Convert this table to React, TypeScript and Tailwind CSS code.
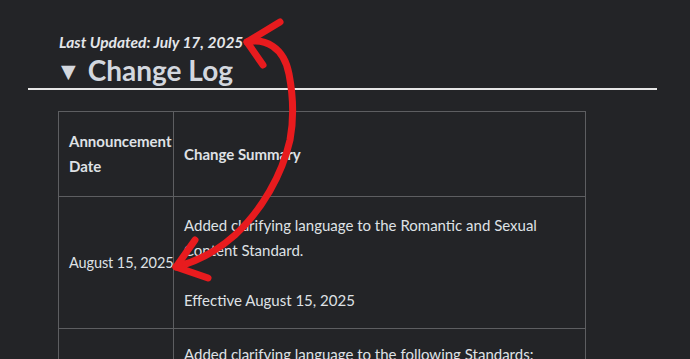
const FONT = { fontFamily: 'Lato, "Noto Sans", sans-serif' };

export default function App() {
  return (
    <div className="relative h-[359px] overflow-hidden bg-[#232427] text-[#dfe1e5]" style={FONT}>
      <div className="pl-[28px] pr-[33px] pt-[32px]">
        <p className="pl-[31px] text-[15.5px] font-bold italic leading-[20px] text-[#e4e6ea]">
          Last Updated: July 17, 2025
        </p>
        <h2 className="flex items-center gap-[7px] pl-[28px] text-[28px] font-bold leading-[36px] text-[#d3d7de]">
          <span className="text-[25px] leading-[24px]">▼</span>
          <span>Change Log</span>
        </h2>
        <div className="h-[2px] bg-[#e6e6e6]" />
        <div className="mt-[21px] pl-[30px]">
          <table className="w-[528px] table-fixed border-collapse text-[15px] leading-[25px]">
            <colgroup>
              <col className="w-[115px]" />
              <col />
            </colgroup>
            <thead>
              <tr>
                <th className="border border-[#5d5e61] py-[17px] pl-[10px] pr-0 text-left font-bold">
                  Announcement Date
                </th>
                <th className="border border-[#5d5e61] py-[17px] pl-[10px] text-left font-bold">
                  Change Summary
                </th>
              </tr>
            </thead>
            <tbody>
              <tr>
                <td className="whitespace-nowrap border border-[#5d5e61] pl-[10px] pr-0 align-middle text-[14.5px] tracking-[-0.1px]">
                  August 15, 2025
                </td>
                <td className="border border-[#5d5e61] pb-[15px] pl-[10px] pr-[10px] pt-[16px]">
                  <p>Added clarifying language to the Romantic and Sexual Content Standard.</p>
                  <p className="mt-[25px]">Effective August 15, 2025</p>
                </td>
              </tr>
              <tr>
                <td className="border border-[#5d5e61] pl-[10px]" />
                <td className="border border-[#5d5e61] py-[13px] pl-[10px] pr-[10px]">
                  <p>Added clarifying language to the following Standards:</p>
                  <p>Dating and Romantic Relationships</p>
                </td>
              </tr>
            </tbody>
          </table>
        </div>
      </div>
      <svg
        className="pointer-events-none absolute left-0 top-0"
        width="690"
        height="359"
        viewBox="0 0 690 359"
        fill="none"
        stroke="#e81b1e"
        strokeWidth="7"
        strokeLinecap="round"
        strokeLinejoin="round"
      >
        <path d="M247 42 C265 38 284 47 289 74 C294 100 293 124 290 140 C282 175 262 210 235 235 C215 253 195 262 176 267" />
        <path d="M280 22 L247 42 L263 65" />
        <path d="M195 240 L176 267 L208 278" />
      </svg>
    </div>
  );
}
